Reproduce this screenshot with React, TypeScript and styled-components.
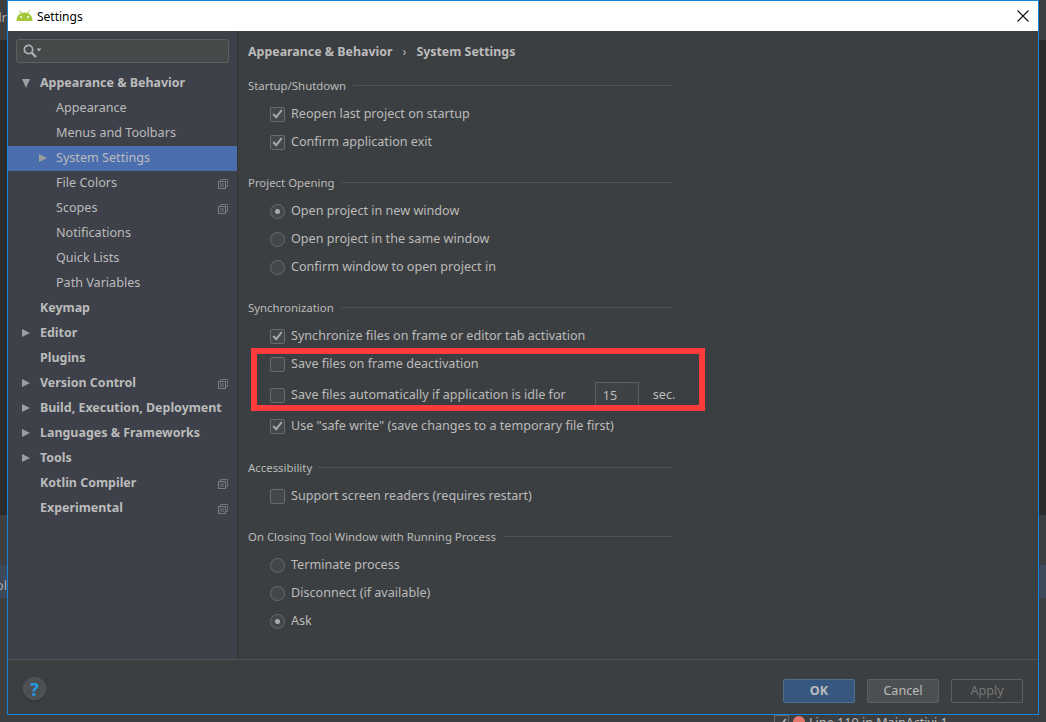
import React from 'react';
import styled, { createGlobalStyle } from 'styled-components';

const GlobalStyle = createGlobalStyle`
    html, body {
        margin: 0;
        padding: 0;
        background: #3c3f41;
    }
    body {
        font-family: "Noto Sans", "Open Sans", "Liberation Sans", sans-serif;
        font-size: 12.6px;
        color: #bbbbbb;
    }
`;

type TreeRow = {
    label: string;
    level?: 0 | 1;
    arrow?: 'down' | 'right';
    selected?: boolean;
    copy?: boolean;
};

const tree: TreeRow[] = [
    { label: 'Appearance & Behavior', arrow: 'down' },
    { label: 'Appearance', level: 1 },
    { label: 'Menus and Toolbars', level: 1 },
    { label: 'System Settings', level: 1, arrow: 'right', selected: true },
    { label: 'File Colors', level: 1, copy: true },
    { label: 'Scopes', level: 1, copy: true },
    { label: 'Notifications', level: 1 },
    { label: 'Quick Lists', level: 1 },
    { label: 'Path Variables', level: 1 },
    { label: 'Keymap' },
    { label: 'Editor', arrow: 'right' },
    { label: 'Plugins' },
    { label: 'Version Control', arrow: 'right', copy: true },
    { label: 'Build, Execution, Deployment', arrow: 'right' },
    { label: 'Languages & Frameworks', arrow: 'right' },
    { label: 'Tools', arrow: 'right' },
    { label: 'Kotlin Compiler', copy: true },
    { label: 'Experimental', copy: true },
];

const AndroidIcon = () => (
    <svg width="17" height="12" viewBox="0 0 17 12">
        <path d="M3.5 0.5 L5.5 3 M13.5 0.5 L11.5 3" stroke="#a4c639" strokeWidth="1" fill="none" />
        <path d="M0.5 11 C0.5 5.5 4 2.5 8.5 2.5 C13 2.5 16.5 5.5 16.5 11 Z" fill="#a4c639" />
        <circle cx="5" cy="7" r="1" fill="#ffffff" />
        <circle cx="12" cy="7" r="1" fill="#ffffff" />
    </svg>
);

const CloseIcon = () => (
    <svg width="12" height="12" viewBox="0 0 12 12">
        <path d="M0.5 0.5 L11.5 11.5 M11.5 0.5 L0.5 11.5" stroke="#111111" strokeWidth="1.1" fill="none" />
    </svg>
);

const SearchIcon = () => (
    <svg width="19" height="14" viewBox="0 0 19 14">
        <circle cx="5.5" cy="5.5" r="4.2" stroke="#afb1b3" strokeWidth="1.7" fill="none" />
        <path d="M8.6 8.6 L13 13" stroke="#afb1b3" strokeWidth="2.2" fill="none" />
        <path d="M13.5 4.5 L18.5 4.5 L16 7.5 Z" fill="#afb1b3" />
    </svg>
);

const CopyIcon = () => (
    <svg width="10" height="10" viewBox="0 0 10 10">
        <path d="M2.5 2.5 L2.5 0.5 L9.5 0.5 L9.5 7.5 L7.5 7.5" stroke="#6f7375" fill="none" />
        <rect x="0.5" y="2.5" width="7" height="7" stroke="#7b7f81" fill="#3e4149" />
        <path d="M2 5 H6 M2 7 H6" stroke="#6f7375" fill="none" />
    </svg>
);

const CheckIcon = () => (
    <svg width="11" height="10" viewBox="0 0 11 10">
        <path d="M1.2 5 L4.2 8.2 L9.8 1" stroke="#a9abad" strokeWidth="2" fill="none" />
    </svg>
);

const Check = ({ checked, children }: { checked?: boolean; children: React.ReactNode }) => (
    <Row>
        <CheckBox>{checked && <CheckIcon />}</CheckBox>
        <RowLabel>{children}</RowLabel>
    </Row>
);

const Radio = ({ checked, children }: { checked?: boolean; children: React.ReactNode }) => (
    <Row>
        <RadioCircle $checked={checked} />
        <RowLabel>{children}</RowLabel>
    </Row>
);

const App = () => {
    return (
        <Desk>
            <GlobalStyle />
            <EdgeText $top={8}>dr</EdgeText>
            <EdgeText $top={576}>ol</EdgeText>
            <Dialog>
                <TitleBar>
                    <AndroidIcon />
                    <TitleText>Settings</TitleText>
                    <CloseButton><CloseIcon /></CloseButton>
                </TitleBar>
                <Body>
                    <Sidebar>
                        <SearchBox><SearchIcon /></SearchBox>
                        <Tree>
                            {tree.map((row) => (
                                <TreeItem key={row.label} $level={row.level ?? 0} $selected={row.selected}>
                                    {row.arrow && <Arrow $dir={row.arrow} $level={row.level ?? 0} />}
                                    <TreeLabel $bold={!row.level}>{row.label}</TreeLabel>
                                    {row.copy && <CopyWrap><CopyIcon /></CopyWrap>}
                                </TreeItem>
                            ))}
                        </Tree>
                    </Sidebar>
                    <Content>
                        <Breadcrumb>
                            <span>Appearance &amp; Behavior</span>
                            <Chevron>›</Chevron>
                            <span>System Settings</span>
                        </Breadcrumb>
                        <Group>
                            <GroupTitle>Startup/Shutdown</GroupTitle>
                            <Check checked>Reopen last project on startup</Check>
                            <Check checked>Confirm application exit</Check>
                        </Group>
                        <Group>
                            <GroupTitle>Project Opening</GroupTitle>
                            <Radio checked>Open project in new window</Radio>
                            <Radio>Open project in the same window</Radio>
                            <Radio>Confirm window to open project in</Radio>
                        </Group>
                        <Group $gap={18}>
                            <GroupTitle>Synchronization</GroupTitle>
                            <Check checked>Synchronize files on frame or editor tab activation</Check>
                            <Check>Save files on frame deactivation</Check>
                            <TallRow>
                                <CheckBox />
                                <RowLabel>Save files automatically if application is idle for</RowLabel>
                                <SecondsInput>15</SecondsInput>
                                <RowLabel>sec.</RowLabel>
                            </TallRow>
                            <Check checked>Use "safe write" (save changes to a temporary file first)</Check>
                        </Group>
                        <Group>
                            <GroupTitle>Accessibility</GroupTitle>
                            <Check>Support screen readers (requires restart)</Check>
                        </Group>
                        <Group>
                            <GroupTitle>On Closing Tool Window with Running Process</GroupTitle>
                            <Radio>Terminate process</Radio>
                            <Radio>Disconnect (if available)</Radio>
                            <Radio checked>Ask</Radio>
                        </Group>
                    </Content>
                </Body>
                <Footer>
                    <HelpButton>?</HelpButton>
                    <Buttons>
                        <DialogButton $variant="primary">OK</DialogButton>
                        <DialogButton>Cancel</DialogButton>
                        <DialogButton $variant="disabled">Apply</DialogButton>
                    </Buttons>
                </Footer>
            </Dialog>
            <BehindStrip>
                <BehindCheck><CheckIcon /></BehindCheck>
                <BreakpointDot />
                <span>Line 110 in MainActivi 1</span>
            </BehindStrip>
            <Highlight />
        </Desk>
    );
};

const Desk = styled.div`
    position: relative;
    width: 1046px;
    height: 722px;
    padding: 0 7px;
    box-sizing: border-box;
    overflow: hidden;
    background: linear-gradient(
        to bottom,
        #3c3f41 0,
        #3c3f41 40px,
        #2b2b2b 40px,
        #2b2b2b 515px,
        #3c3f41 515px,
        #3c3f41 565px,
        #3d4a5c 565px,
        #3d4a5c 598px,
        #3c3f41 598px
    );
`;

const EdgeText = styled.div<{ $top: number }>`
    position: absolute;
    left: 0;
    top: ${(p) => p.$top}px;
    width: 7px;
    overflow: hidden;
    direction: rtl;
    font-size: 13px;
    color: #a9abad;
`;

const Dialog = styled.div`
    display: flex;
    flex-direction: column;
    height: 715px;
    box-sizing: border-box;
    border: 1px solid #1583d8;
    background: #3c3f41;
`;

const TitleBar = styled.div`
    display: flex;
    align-items: center;
    flex: none;
    height: 30px;
    padding: 0 9px 0 8px;
    background: #ffffff;
`;

const TitleText = styled.span`
    margin-left: 4px;
    font-size: 12px;
    color: #000000;
`;

const CloseButton = styled.div`
    display: flex;
    margin-left: auto;
`;

const Body = styled.div`
    display: flex;
    flex: 1;
    min-height: 0;
`;

const Sidebar = styled.div`
    flex: none;
    width: 229px;
    padding-top: 8px;
    background: #3e4149;
    border-right: 1px solid #333537;
`;

const SearchBox = styled.div`
    display: flex;
    align-items: center;
    height: 24px;
    margin: 0 8px;
    padding-left: 6px;
    box-sizing: border-box;
    border: 1px solid #5e6060;
    border-radius: 3px;
    background: #45494a;
`;

const Tree = styled.div`
    margin-top: 8px;
`;

const TreeItem = styled.div<{ $level: number; $selected?: boolean }>`
    position: relative;
    display: flex;
    align-items: center;
    height: 25px;
    padding-left: ${(p) => (p.$level ? 48 : 32)}px;
    padding-right: 9px;
    background: ${(p) => (p.$selected ? '#4b6eaf' : 'transparent')};
`;

const Arrow = styled.span<{ $dir: 'down' | 'right'; $level: number }>`
    position: absolute;
    left: ${(p) => (p.$level ? 31 : 14)}px;
    top: 8px;
    width: 0;
    height: 0;
    ${(p) =>
        p.$dir === 'down'
            ? `border-left: 4.5px solid transparent;
               border-right: 4.5px solid transparent;
               border-top: 9px solid #9b9d9f;`
            : `border-top: 4.5px solid transparent;
               border-bottom: 4.5px solid transparent;
               border-left: 8px solid #9b9d9f;`}
`;

const TreeLabel = styled.span<{ $bold?: boolean }>`
    margin-bottom: 2px;
    font-size: ${(p) => (p.$bold ? 12.45 : 12.6)}px;
    font-weight: ${(p) => (p.$bold ? 700 : 400)};
    white-space: nowrap;
`;

const CopyWrap = styled.span`
    display: flex;
    margin-left: auto;
`;

const Content = styled.div`
    flex: 1;
    padding: 10px 0 0 10px;
    min-width: 0;
`;

const Breadcrumb = styled.div`
    display: flex;
    align-items: center;
    height: 20px;
    margin-bottom: 15px;
    font-size: 12.4px;
    font-weight: 700;
`;

const Chevron = styled.span`
    margin: 0 10px 0 10px;
    font-weight: 400;
`;

const Group = styled.div<{ $gap?: number }>`
    width: 424px;
    margin-bottom: ${(p) => p.$gap ?? 17}px;
`;

const GroupTitle = styled.div`
    display: flex;
    align-items: center;
    height: 20px;
    margin-bottom: 4px;
    padding-bottom: 2px;
    box-sizing: border-box;
    font-size: 11.4px;
    white-space: nowrap;

    &::after {
        content: '';
        flex: 1;
        height: 1px;
        margin-left: 7px;
        background: #515455;
    }
`;

const Row = styled.div`
    display: flex;
    align-items: center;
    height: 28px;
    padding-left: 22px;
    white-space: nowrap;
`;

const TallRow = styled(Row)`
    height: 34px;
`;

const RowLabel = styled.span`
    margin-bottom: 2px;
`;

const CheckBox = styled.span`
    display: flex;
    align-items: center;
    justify-content: center;
    flex: none;
    width: 15px;
    height: 15px;
    margin-right: 6px;
    box-sizing: border-box;
    border: 1px solid #6b6b6b;
    border-radius: 2px;
    background: #43474a;
`;

const RadioCircle = styled.span<{ $checked?: boolean }>`
    display: flex;
    align-items: center;
    justify-content: center;
    flex: none;
    width: 15px;
    height: 15px;
    margin-right: 6px;
    box-sizing: border-box;
    border: 1px solid #6b6b6b;
    border-radius: 50%;
    background: #43474a;

    &::after {
        content: '';
        display: ${(p) => (p.$checked ? 'block' : 'none')};
        width: 5px;
        height: 5px;
        border-radius: 50%;
        background: #a9abad;
    }
`;

const SecondsInput = styled.div`
    display: flex;
    align-items: center;
    flex: none;
    width: 44px;
    height: 26px;
    margin: 0 14px 0 29px;
    padding-left: 7px;
    box-sizing: border-box;
    border: 1px solid #5e6060;
    background: #3f4244;
`;

const Footer = styled.div`
    display: flex;
    flex: none;
    justify-content: space-between;
    height: 55px;
    padding: 19px 15px 0;
    box-sizing: border-box;
    border-top: 1px solid #515455;
`;

const HelpButton = styled.div`
    display: flex;
    align-items: center;
    justify-content: center;
    width: 23px;
    height: 23px;
    margin-top: -2px;
    border-radius: 50%;
    border: 1px solid #55595b;
    box-sizing: border-box;
    background: #4c5052;
    box-shadow: 0 5px 4px -3px #333537;
    color: #1e9ce6;
    font-size: 18px;
    font-weight: 700;
    font-family: "Open Sans", sans-serif;
`;

const Buttons = styled.div`
    display: flex;
    gap: 12px;
`;

const DialogButton = styled.div<{ $variant?: 'primary' | 'disabled' }>`
    display: flex;
    align-items: center;
    justify-content: center;
    width: 72px;
    height: 24px;
    padding-bottom: 1px;
    box-sizing: border-box;
    border-radius: 2px;
    border: 1px solid ${(p) => (p.$variant === 'primary' ? '#4c708c' : '#5e6060')};
    background: ${(p) => (p.$variant === 'primary' ? '#365880' : p.$variant === 'disabled' ? 'transparent' : '#4c5052')};
    color: ${(p) => (p.$variant === 'disabled' ? '#777777' : '#bbbbbb')};
    font-weight: ${(p) => (p.$variant === 'primary' ? 700 : 400)};
`;

const BehindStrip = styled.div`
    display: flex;
    align-items: flex-start;
    height: 7px;
    padding-left: 767px;
    overflow: hidden;
    line-height: 15px;
    color: #bbbbbb;
    white-space: nowrap;
`;

const BehindCheck = styled.span`
    display: flex;
    align-items: center;
    justify-content: center;
    width: 15px;
    height: 15px;
    margin-right: 4px;
    box-sizing: border-box;
    border: 1px solid #6b6b6b;
`;

const BreakpointDot = styled.span`
    width: 12px;
    height: 12px;
    margin: 1px 4px 0 0;
    border-radius: 50%;
    background: #e5786d;
`;

const Highlight = styled.div`
    position: absolute;
    left: 251px;
    top: 348px;
    width: 454px;
    height: 63px;
    box-sizing: border-box;
    border: 6.5px solid #ff3b3b;
    pointer-events: none;
`;

export default App;
